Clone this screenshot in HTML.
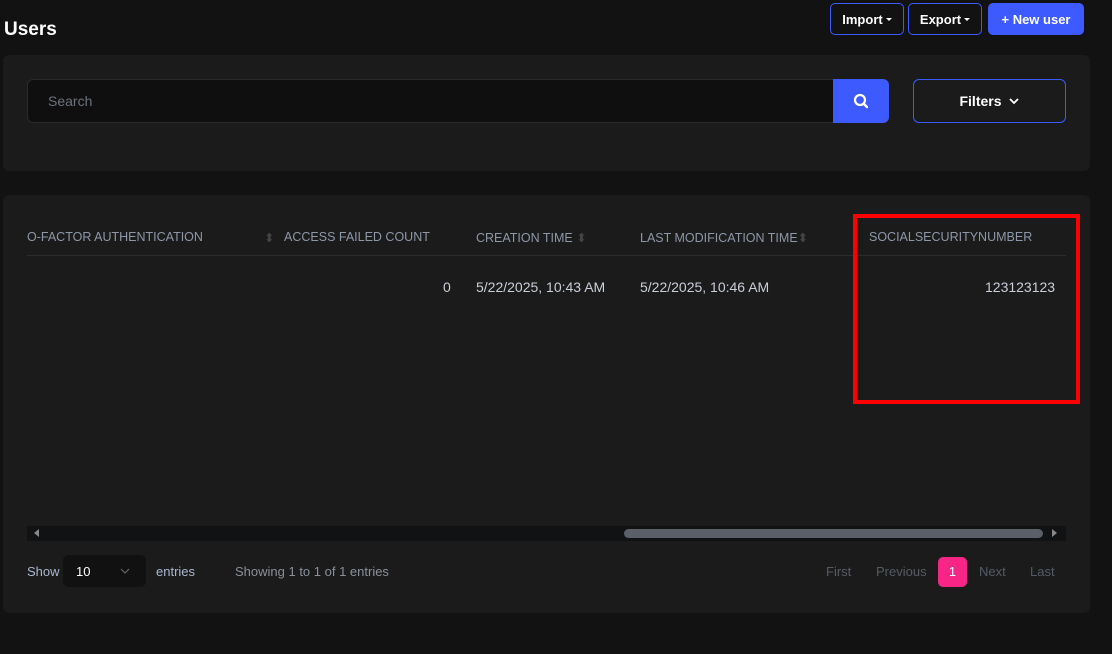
<!DOCTYPE html>
<html><head><meta charset="utf-8"><style>
*{box-sizing:border-box;margin:0;padding:0}
body{width:1112px;height:654px;background:#121212;font-family:"Liberation Sans",sans-serif;position:relative;overflow:hidden;color:#fff}
.a{position:absolute}
.card{background:#1b1b1b;border-radius:6px}
.btn{position:absolute;top:3px;height:32px;border:1px solid #3d5afe;border-radius:5px;font-size:13px;font-weight:bold;color:#fff;display:flex;align-items:center;justify-content:center}
.th{position:absolute;top:230px;font-size:12.5px;color:#8e97a8;letter-spacing:0;white-space:nowrap}
.td{position:absolute;top:279px;font-size:14px;color:#c9ced8;white-space:nowrap}
.pg{position:absolute;top:564px;font-size:13px;color:#555b66}
.car{display:inline-block;border-left:3px solid transparent;border-right:3px solid transparent;border-top:3px solid #fff;margin-left:3px;vertical-align:middle}
</style></head><body>
<div class="a" style="left:4px;top:19px;font-size:19px;font-weight:bold">Users</div>
<div class="btn" style="left:830px;width:74px;background:#121212">Import<span class="car"></span></div>
<div class="btn" style="left:908px;width:74px;background:#121212">Export<span class="car"></span></div>
<div class="btn" style="left:988px;width:96px;background:#3d5afe">+ New user</div>

<div class="a card" style="left:3px;top:55px;width:1087px;height:116px"></div>
<div class="a" style="left:27px;top:79px;width:807px;height:44px;background:#0f0f0f;border:1px solid #2a2a2a;border-radius:6px 0 0 6px;font-size:14px;color:#6c727d;padding:13px 20px">Search</div>
<div class="a" style="left:833px;top:79px;width:56px;height:44px;background:#3d5afe;border-radius:0 6px 6px 0">
<svg width="56" height="44" viewBox="0 0 56 44"><circle cx="27" cy="21" r="5" stroke="#fff" stroke-width="2.2" fill="none"/><line x1="30.5" y1="24.5" x2="34" y2="28" stroke="#fff" stroke-width="2.4" stroke-linecap="round"/></svg></div>
<div class="a" style="left:913px;top:79px;width:153px;height:44px;border:1px solid #3d5afe;border-radius:6px;display:flex;align-items:center;justify-content:center;font-size:14px;font-weight:bold">Filters
<svg width="12" height="10" style="margin-left:6px"><path d="M2 3l4 4 4-4" stroke="#fff" stroke-width="1.8" fill="none"/></svg></div>

<div class="a card" style="left:3px;top:195px;width:1087px;height:418px"></div>
<div class="th" style="left:27px">O-FACTOR AUTHENTICATION</div>
<div class="th" style="left:264px;color:#444">⬍</div>
<div class="th" style="left:284px">ACCESS FAILED COUNT</div>
<div class="th" style="left:476px">CREATION TIME <span style="color:#444">⬍</span></div>
<div class="th" style="left:640px">LAST MODIFICATION TIME<span style="color:#444">⬍</span></div>
<div class="th" style="left:869px">SOCIALSECURITYNUMBER</div>
<div class="a" style="left:27px;top:255px;width:1039px;height:1px;background:#2c2c2c"></div>
<div class="td" style="left:443px">0</div>
<div class="td" style="left:476px">5/22/2025, 10:43 AM</div>
<div class="td" style="left:640px">5/22/2025, 10:46 AM</div>
<div class="td" style="left:985px">123123123</div>
<div class="a" style="left:853px;top:214px;width:227px;height:190px;border:4px solid #f00"></div>

<div class="a" style="left:27px;top:526px;width:1039px;height:15px;background:#111214"></div>
<div class="a" style="left:624px;top:529px;width:419px;height:9px;background:#5b6068;border-radius:5px"></div>
<div class="a" style="left:34px;top:529px;width:0;height:0;border-top:4px solid transparent;border-bottom:4px solid transparent;border-right:5px solid #888"></div>
<div class="a" style="left:1052px;top:529px;width:0;height:0;border-top:4px solid transparent;border-bottom:4px solid transparent;border-left:5px solid #888"></div>

<div class="a" style="left:27px;top:564px;font-size:13px;color:#a9b8d0">Show</div>
<div class="a" style="left:63px;top:555px;width:83px;height:32px;background:#111;border-radius:6px;font-size:13px;color:#fff;padding:9px 13px">10
<svg width="10" height="8" style="position:absolute;left:57px;top:12px"><path d="M1 2l4 4 4-4" stroke="#666" stroke-width="1.2" fill="none"/></svg></div>
<div class="a" style="left:156px;top:564px;font-size:13px;color:#a9b8d0">entries</div>
<div class="a" style="left:235px;top:564px;font-size:13px;color:#8a909a">Showing 1 to 1 of 1 entries</div>
<div class="pg" style="left:826px">First</div>
<div class="pg" style="left:876px">Previous</div>
<div class="a" style="left:938px;top:557px;width:29px;height:30px;background:#f72585;border-radius:5px;font-size:13px;color:#fff;text-align:center;line-height:30px">1</div>
<div class="pg" style="left:979px">Next</div>
<div class="pg" style="left:1030px">Last</div>
</body></html>
